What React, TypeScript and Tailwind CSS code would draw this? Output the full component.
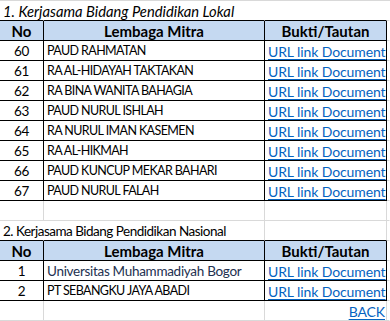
import React from "react";

type Line = "black" | "gray" | "none";

const lineClass = (side: "b" | "r", c: Line) => {
    if (side === "b") {
        if (c === "black") return "border-b border-b-black";
        if (c === "gray") return "border-b border-b-[#d9d9d9]";
        return "border-b border-b-transparent";
    }
    if (c === "black") return "border-r border-r-black";
    if (c === "gray") return "border-r border-r-[#d9d9d9]";
    return "border-r border-r-transparent";
};

const Cell = ({
    w,
    b = "gray",
    r = "gray",
    className = "",
    children,
}: {
    w: string;
    b?: Line;
    r?: Line;
    className?: string;
    children?: React.ReactNode;
}) => (
    <div className={`${w} h-full flex items-center pt-px shrink-0 ${lineClass("b", b)} ${lineClass("r", r)} ${className}`}>
        {children}
    </div>
);

const W1 = "w-[44px]";
const W2 = "w-[221px]";
const W3 = "w-[122px]";
const W4 = "flex-1";

const Link = ({ children }: { children: React.ReactNode }) => (
    <span className="text-[#0563c1] text-[14px] tracking-[-0.1px] underline underline-offset-2 decoration-1">
        {children}
    </span>
);

const Title = ({ children, italic }: { children: React.ReactNode; italic?: boolean }) => (
    <div className="flex h-[20px]">
        <Cell w={W1} b="black" r="none" className="overflow-visible relative z-10">
            <span
                className={`pl-[3px] whitespace-nowrap ${
                    italic ? "italic text-[14.75px] tracking-normal" : "text-[13.5px] tracking-[-0.5px]"
                }`}
            >
                {children}
            </span>
        </Cell>
        <Cell w={W2} b="black" r={italic ? "none" : "gray"} />
        <Cell w={W3} b="black" r={italic ? "none" : "gray"} />
        <Cell w={W4} b="gray" r="none" />
    </div>
);

const Header = () => (
    <div className="flex h-[20px] font-bold text-[15px] tracking-normal">
        <Cell w={W1} b="black" r="black" className="bg-[#c5d9f1] justify-center">No</Cell>
        <Cell w={W2} b="black" r="black" className="bg-[#c5d9f1] justify-center">Lembaga Mitra</Cell>
        <Cell w={W3} b="black" r="black" className="bg-[#c5d9f1] justify-center">Bukti/Tautan</Cell>
        <Cell w={W4} b="gray" r="none" />
    </div>
);

const Row = ({ no, name, color = "" }: { no: string; name: string; color?: string }) => {
    // all-caps names run wide in Lato, squeeze them a bit
    const caps = name === name.toUpperCase();
    return (
        <div className="flex h-[20px]">
            <Cell w={W1} b="black" r="black" className="justify-center">{no}</Cell>
            <Cell
                w={W2}
                b="black"
                r="black"
                className={`pl-[3px] whitespace-nowrap ${caps ? "text-[12.5px] tracking-[-0.6px]" : ""} ${color}`}
            >
                {name}
            </Cell>
            <Cell w={W3} b="black" r="black" className="pl-[3px] whitespace-nowrap">
                <Link>URL link Document</Link>
            </Cell>
            <Cell w={W4} b="gray" r="none" />
        </div>
    );
};

const lokal = [
    ["60", "PAUD RAHMATAN"],
    ["61", "RA AL-HIDAYAH TAKTAKAN"],
    ["62", "RA BINA WANITA BAHAGIA"],
    ["63", "PAUD NURUL ISHLAH"],
    ["64", "RA NURUL IMAN KASEMEN"],
    ["65", "RA AL-HIKMAH"],
    ["66", "PAUD KUNCUP MEKAR BAHARI"],
    ["67", "PAUD NURUL FALAH"],
];

export default function App() {
    return (
        <div
            className="w-[390px] h-[321px] bg-white text-[13.5px] tracking-[-0.3px] text-black border-t border-t-[#d9d9d9] overflow-hidden"
            style={{ fontFamily: "Lato, 'Open Sans', sans-serif" }}
        >
            <Title italic>1. Kerjasama Bidang Pendidikan Lokal</Title>
            <Header />
            {lokal.map(([no, name]) => (
                <Row key={no} no={no} name={name} />
            ))}
            <div className="flex h-[20px]">
                <Cell w={W1} />
                <Cell w={W2} />
                <Cell w={W3} />
                <Cell w={W4} r="none" />
            </div>
            <Title>2. Kerjasama Bidang Pendidikan Nasional</Title>
            <Header />
            <Row no="1" name="Universitas Muhammadiyah Bogor" color="text-[#22304f]" />
            <Row no="2" name="PT SEBANGKU JAYA ABADI" />
            <div className="flex h-[20px]">
                <Cell w={W1} />
                <Cell w={W2} />
                <Cell w={W3} className="justify-end pr-[1px]">
                    <Link>BACK</Link>
                </Cell>
                <Cell w={W4} r="none" />
            </div>
        </div>
    );
}
